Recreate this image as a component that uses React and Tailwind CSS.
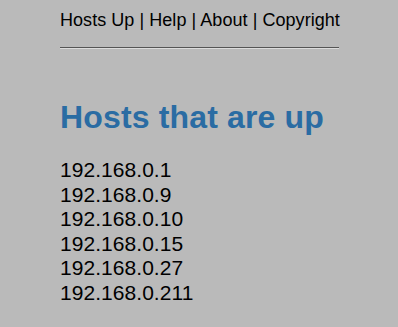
export default function App() {
  const ips = [
    "192.168.0.1",
    "192.168.0.9",
    "192.168.0.10",
    "192.168.0.15",
    "192.168.0.27",
    "192.168.0.211",
  ];
  return (
    <div
      className="min-h-[327px] w-full bg-[#bababa] text-black"
      style={{ fontFamily: '"Liberation Sans", Arial, sans-serif' }}
    >
      <div className="ml-[60px] w-[279px] pt-[10px]">
        <div className="text-[18px] leading-[20px] tracking-[0.05px] whitespace-nowrap">
          Hosts Up | Help | About | Copyright
        </div>
        <div className="mt-[17px] h-[2px] border-t border-b border-t-[#555555] border-b-[#dcdcdc]" />
        <h1 className="mt-[50px] text-[32px] leading-[36px] tracking-[0.15px] font-bold text-[#2a6ca3] whitespace-nowrap">
          Hosts that are up
        </h1>
        <div className="mt-[23px] text-[21px] leading-[24.5px] tracking-[0.05px]">
          {ips.map((ip) => (
            <div key={ip}>{ip}</div>
          ))}
        </div>
      </div>
    </div>
  );
}
